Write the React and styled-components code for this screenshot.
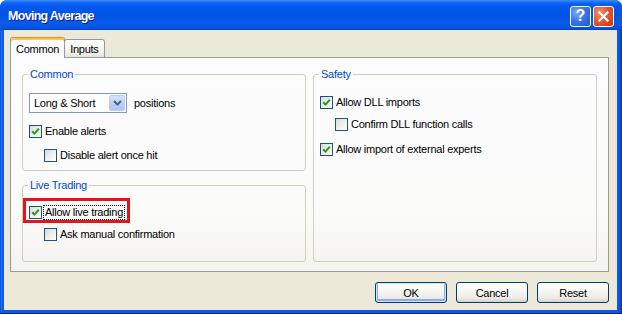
import React from 'react';
import styled, { createGlobalStyle } from 'styled-components';

const Global = createGlobalStyle`
  html, body { margin: 0; padding: 0; background: #ffffff; }
  body { font-family: "Liberation Sans", Arial, sans-serif; font-size: 11px; letter-spacing: -0.25px; color: #000; }
  * { box-sizing: border-box; }
`;

const Window = styled.div`
  width: 622px;
  height: 314px;
  display: flex;
  flex-direction: column;
  background: linear-gradient(to right, #0840C8 0, #1A6CF0 1px, #0A5BE8 3px, #0A5BE8 calc(100% - 4px), #0A4FD8 calc(100% - 2px), #00309E 100%);
  border-radius: 7px 7px 0 0;
  overflow: hidden;
  border-bottom: 1px solid #00138C;
`;

const TitleBar = styled.div`
  height: 30px;
  flex: none;
  display: flex;
  align-items: center;
  justify-content: space-between;
  padding: 0 8px 0 8px;
  background: linear-gradient(180deg, #3D8EFF 0%, #0F63F0 10%, #0058EE 22%, #0055E6 50%, #085CEA 80%, #0852DA 94%, #0043CF 100%);
`;

const Title = styled.span`
  color: #ffffff;
  font-family: "Liberation Sans", Arial, sans-serif;
  font-weight: bold;
  font-size: 12.5px;
  letter-spacing: -0.7px;
  text-shadow: 1px 1px 0 #0A1A8C;
  margin-top: 1px;
`;

const TitleButtons = styled.div`
  display: flex;
  gap: 2px;
  margin-top: 2px;
`;

const TitleButton = styled.div`
  width: 21px;
  height: 21px;
  border: 1px solid #ffffff;
  border-radius: 3px;
  display: grid;
  place-items: center;
  color: #ffffff;
  font-weight: bold;
  font-size: 16px;
  letter-spacing: 0;
  line-height: 1;
  background: ${p => p.$variant === 'close'
    ? 'radial-gradient(circle at 30% 30%, #F0936F 0%, #E2582F 45%, #C83A16 100%)'
    : 'radial-gradient(circle at 30% 30%, #7BA8FB 0%, #3A74EC 45%, #1E55D6 100%)'};
`;

const Body = styled.div`
  flex: 1;
  margin: 0 5px 3px 4px;
  background: #ECE9D8;
  padding: 7px 8px 0 6px;
  display: flex;
  flex-direction: column;
`;

const TabRow = styled.div`
  display: flex;
  align-items: flex-end;
  height: 21px;
  flex: none;
  margin-bottom: -1px;
  position: relative;
  z-index: 1;
`;

const Tab = styled.div`
  height: ${p => (p.$active ? '21px' : '18px')};
  margin-bottom: ${p => (p.$active ? '0' : '1px')};
  padding: 0 5px;
  display: flex;
  align-items: center;
  border: 1px solid #919B9C;
  border-bottom: none;
  border-radius: 3px 3px 0 0;
  ${p => (p.$active
    ? `
      background: #FCFCFE;
      border-top-color: #E68B2C;
      box-shadow: inset 0 2px 0 #FFC73C;
      padding-top: 2px;
    `
    : `
      background: linear-gradient(#FFFFFF, #F3F2EC 70%, #E6E4DA);
      margin-left: -1px;
      padding-top: 1px;
    `)}
`;

const Panel = styled.div`
  height: 215px;
  flex: none;
  border: 1px solid #919B9C;
  background: linear-gradient(#FCFCFE 0%, #FBFBFA 70%, #F4F3EE 100%);
  padding: 10px 11px 9px 11px;
  display: grid;
  grid-template-columns: 1fr 1fr;
  column-gap: 7px;
`;

const Column = styled.div`
  display: flex;
  flex-direction: column;
  gap: 8px;
  min-height: 0;
`;

const Group = styled.fieldset`
  margin: 0;
  min-width: 0;
  border: 1px solid #D0D0BF;
  border-radius: 3px;
  padding: ${p => p.$pt}px 6px 8px 6px;
  display: flex;
  flex-direction: column;
  flex: ${p => (p.$grow ? 1 : 'none')};
`;

const Legend = styled.legend`
  color: #0046D5;
  padding: 0 2px;
  margin-left: -1px;
  line-height: 13px;
  font-size: 11px;
`;

const SelectRow = styled.div`
  display: flex;
  align-items: center;
  gap: 7px;
  height: 20px;
`;

const Select = styled.div`
  width: 98px;
  height: 20px;
  border: 1px solid #7F9DB9;
  background: #ffffff;
  display: flex;
  align-items: center;
  justify-content: space-between;
  padding: 0 1px 0 4px;
`;

const DropButton = styled.div`
  width: 16px;
  height: 16px;
  border: 1px solid #B9CCF5;
  border-radius: 2px;
  background: linear-gradient(#D6E3FD, #B9CEF8 60%, #ADC4F5);
  display: grid;
  place-items: center;
`;

const CheckRow = styled.div`
  display: flex;
  align-items: center;
  gap: 2px;
  height: 13px;
  margin-top: ${p => p.$mt || 0}px;
  margin-left: ${p => (p.$indent ? 15 : 0)}px;
  position: relative;
`;

const Box = styled.span`
  width: 13px;
  height: 13px;
  flex: none;
  border: 1px solid #1C5180;
  background: linear-gradient(135deg, #DCDCD7 0%, #F2F2EE 60%, #FFFFFF 100%);
  display: grid;
  place-items: center;
`;

const Label = styled.span`
  padding: 0 1px;
  line-height: 13px;
  white-space: nowrap;
  outline: ${p => (p.$focus ? '1px dotted #000' : 'none')};
`;

const Highlight = styled.div`
  position: absolute;
  left: -6px;
  top: -8px;
  width: 107px;
  height: 25px;
  border: 3px solid #E4141B;
  pointer-events: none;
`;

const ButtonRow = styled.div`
  display: flex;
  justify-content: flex-end;
  gap: 9px;
  margin-top: 10px;
`;

const Button = styled.div`
  width: 72px;
  height: 21px;
  border: 1px solid #003C74;
  border-radius: 3px;
  display: grid;
  place-items: center;
  background: linear-gradient(#FFFFFF 0%, #F7F7F4 40%, #ECEBE6 80%, #D6D0C5 100%);
  box-shadow: ${p => (p.$default
    ? 'inset 0 0 0 1px #CEE7FF, inset 0 -1px 0 2px #8EACE8'
    : 'none')};
`;

const Check = ({ checked }) => (
  <Box>
    {checked && (
      <svg width="9" height="9" viewBox="0 0 9 9">
        <path d="M1.2 4.2 L3.4 6.6 L7.8 1.8" fill="none" stroke="#21A121" strokeWidth="2" />
      </svg>
    )}
  </Box>
);

const Option = ({ checked, label, mt, indent, focus, highlight }) => (
  <CheckRow $mt={mt} $indent={indent}>
    <Check checked={checked} />
    <Label $focus={focus}>{label}</Label>
    {highlight && <Highlight />}
  </CheckRow>
);

export default function App() {
  return (
    <>
      <Global />
      <Window>
        <TitleBar>
          <Title>Moving Average</Title>
          <TitleButtons>
            <TitleButton $variant="help">?</TitleButton>
            <TitleButton $variant="close">
              <svg width="11" height="11" viewBox="0 0 11 11">
                <path d="M1.5 1.5 L9.5 9.5 M9.5 1.5 L1.5 9.5" stroke="#fff" strokeWidth="2.2" strokeLinecap="square" />
              </svg>
            </TitleButton>
          </TitleButtons>
        </TitleBar>
        <Body>
          <TabRow>
            <Tab $active>Common</Tab>
            <Tab>Inputs</Tab>
          </TabRow>
          <Panel>
            <Column>
              <Group $pt={12}>
                <Legend>Common</Legend>
                <SelectRow>
                  <Select>
                    <span>Long &amp; Short</span>
                    <DropButton>
                      <svg width="9" height="6" viewBox="0 0 9 6">
                        <path d="M1 1 L4.5 4.5 L8 1" fill="none" stroke="#4D6185" strokeWidth="2" />
                      </svg>
                    </DropButton>
                  </Select>
                  <span>positions</span>
                </SelectRow>
                <Option checked label="Enable alerts" mt={12} />
                <Option label="Disable alert once hit" mt={11} indent />
              </Group>
              <Group $pt={14} $grow>
                <Legend>Live Trading</Legend>
                <Option checked label="Allow live trading" focus highlight />
                <Option label="Ask manual confirmation" mt={9} indent />
              </Group>
            </Column>
            <Column>
              <Group $pt={15} $grow>
                <Legend>Safety</Legend>
                <Option checked label="Allow DLL imports" />
                <Option label="Confirm DLL function calls" mt={9} indent />
                <Option checked label="Allow import of external experts" mt={12} />
              </Group>
            </Column>
          </Panel>
          <ButtonRow>
            <Button $default>OK</Button>
            <Button>Cancel</Button>
            <Button>Reset</Button>
          </ButtonRow>
        </Body>
      </Window>
    </>
  );
}
